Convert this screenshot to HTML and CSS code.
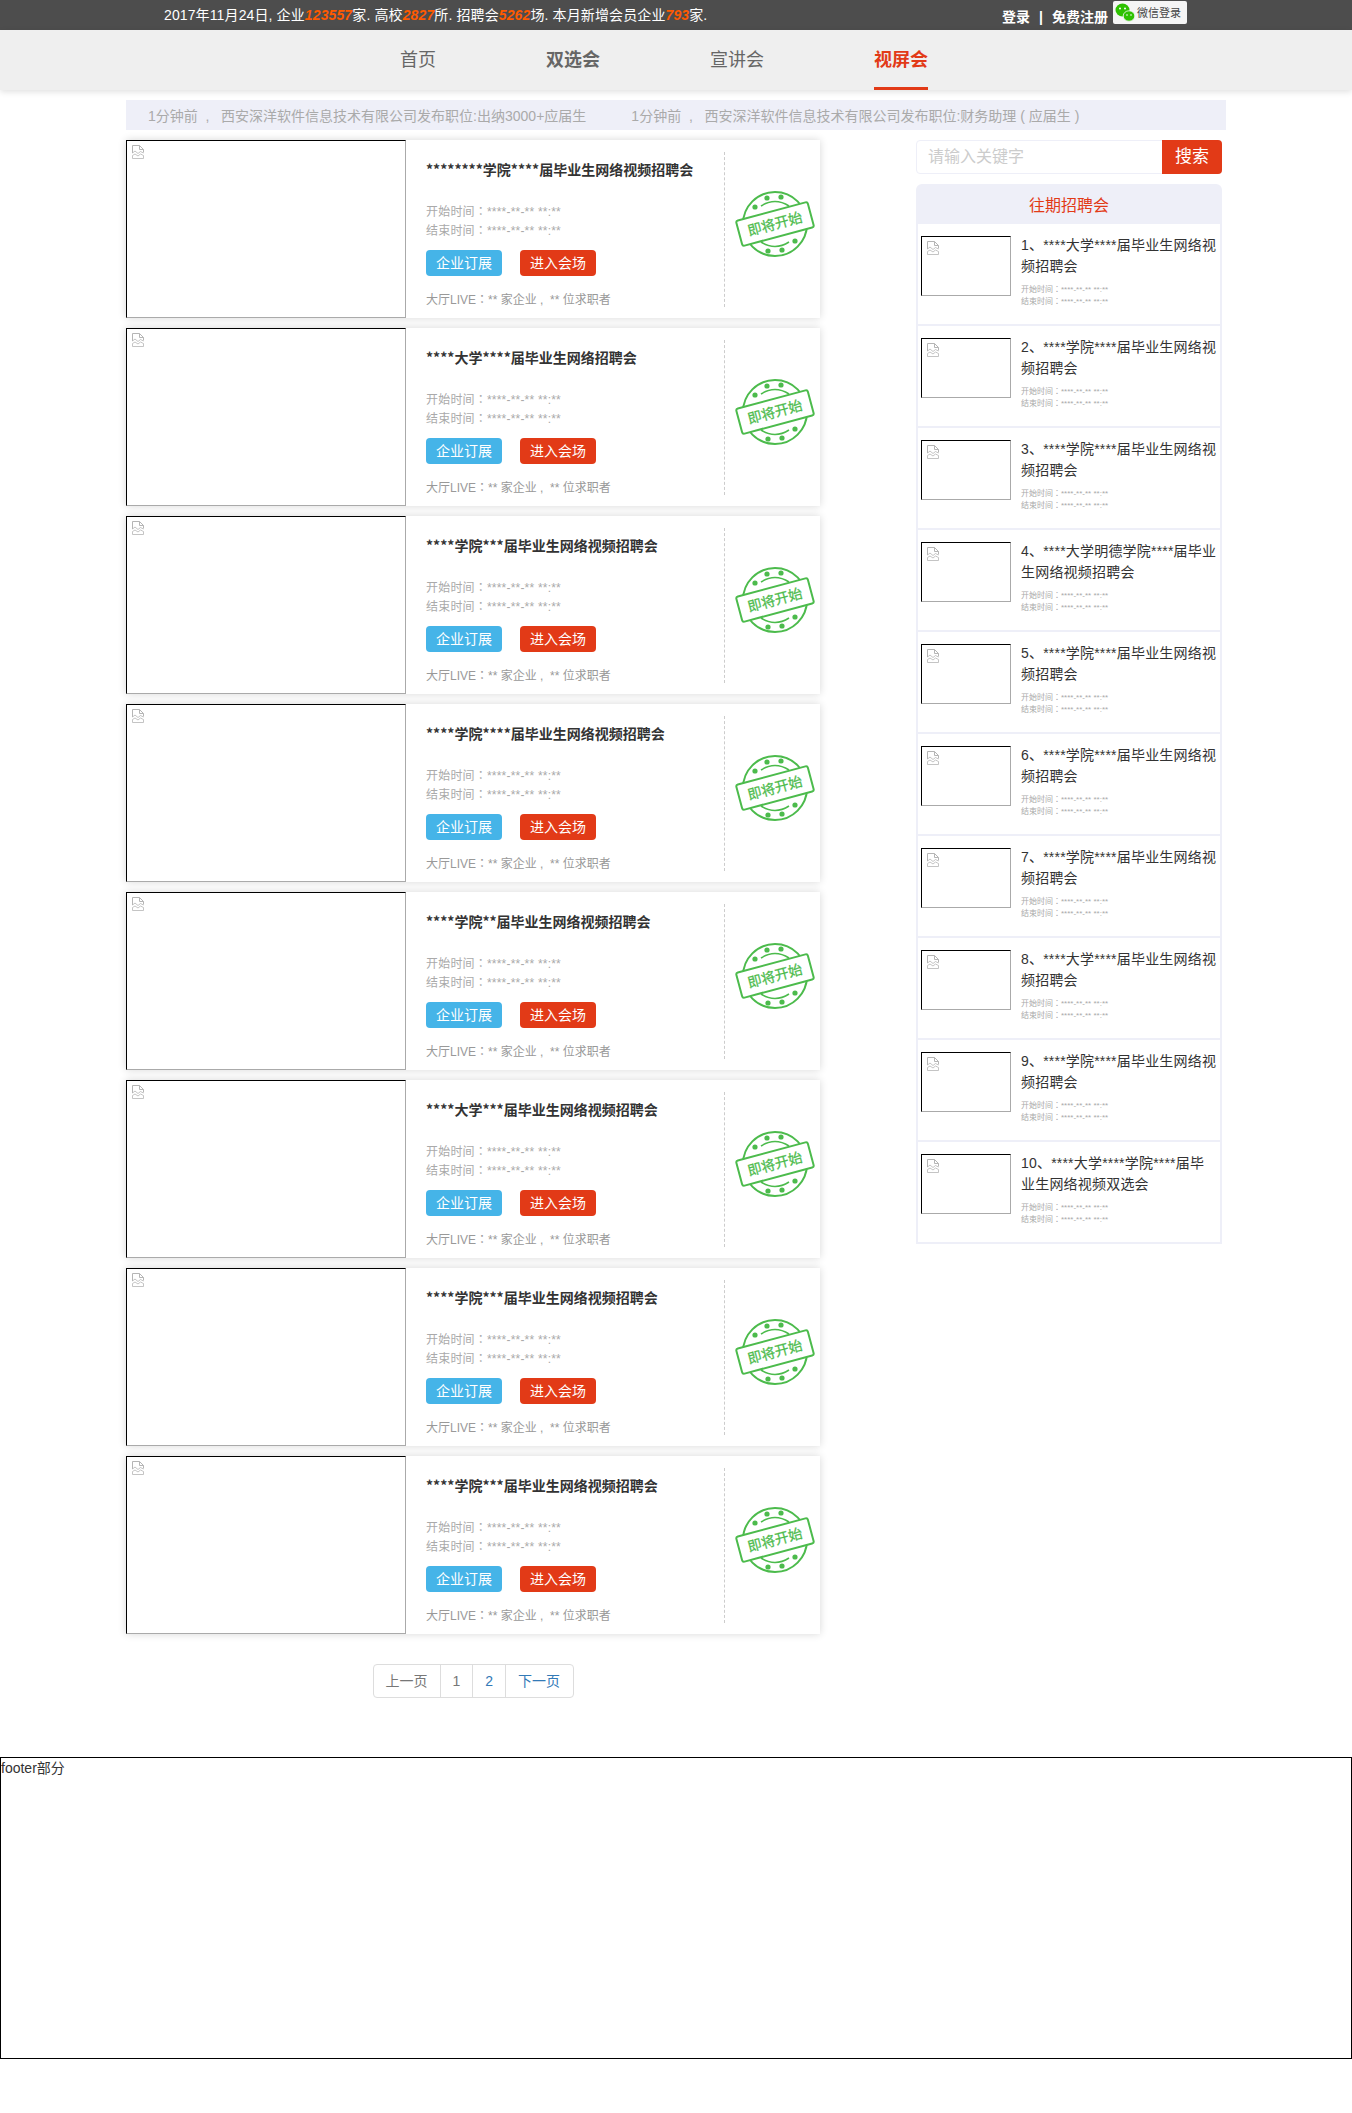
FILE: index.html
```html
<!DOCTYPE html>
<html>
<head>
    <meta charset="UTF-8">
    <title>视屏会</title>
    <link rel="stylesheet" href="styles.css">
</head>
<body>
    <svg class="defs" width="0" height="0">
        <symbol id="broken" viewBox="0 0 12 14">
            <path d="M.5 8V.5H7.5L11.5 4.5V7.5M7.5 .5V4.5H11.5" fill="none" stroke="#b5b5b5"/>
            <path d="M.5 8L3 6L6 8.5L8.5 6.5L11.5 8M.5 10.5L3 9L6 11L8.5 9L11.5 10.5V13.5H.5Z" fill="none" stroke="#b5b5b5" stroke-width=".8"/>
        </symbol>
        <symbol id="stamp" viewBox="0 0 80 80">
            <g fill="none" stroke="#4cbb4c">
                <circle cx="40" cy="40" r="32" stroke-width="2"/>
                <path d="M26 22Q40 13 54 22M26 58Q40 67 54 58" stroke-width="1.6"/>
            </g>
            <g fill="#4cbb4c">
                <circle cx="20" cy="23" r="2.6"/><circle cx="32" cy="14" r="2.6"/><circle cx="46" cy="13" r="2.6"/>
                <circle cx="33" cy="67" r="2.6"/><circle cx="47" cy="66" r="2.6"/><circle cx="60" cy="57" r="2.6"/>
            </g>
            <rect x="3" y="27" width="74" height="26" rx="2" transform="rotate(-15 40 40)" fill="#fff" stroke="#4cbb4c" stroke-width="2"/>
        </symbol>
    </svg>

    <div class="topbar">
        <div class="wrap topbar-in">
            <p class="stats">2017年11月24日, 企业<em>123557</em>家. 高校<em>2827</em>所. 招聘会<em>5262</em>场. 本月新增会员企业<em>793</em>家.</p>
            <div class="login">
                <a>登录</a><span class="sep">|</span><a>免费注册</a>
                <span class="wx">
                    <svg width="20" height="20" viewBox="0 0 20 20">
                        <ellipse cx="7.5" cy="7" rx="7" ry="6.5" fill="#2dc100"/>
                        <ellipse cx="14" cy="13" rx="5.8" ry="5.2" fill="#2dc100" stroke="#f5f5f5" stroke-width=".8"/>
                        <circle cx="5" cy="5.5" r="1" fill="#fff"/><circle cx="10" cy="5.5" r="1" fill="#fff"/>
                        <circle cx="12" cy="12" r=".8" fill="#fff"/><circle cx="16" cy="12" r=".8" fill="#fff"/>
                    </svg>
                    微信登录
                </span>
            </div>
        </div>
    </div>

    <nav class="nav">
        <div class="wrap nav-in">
            <a>首页</a>
            <a class="bold">双选会</a>
            <a>宣讲会</a>
            <a class="bold active">视屏会</a>
        </div>
    </nav>

    <div class="wrap">
        <div class="ticker">
            <span>1分钟前&nbsp;&nbsp;,&nbsp;&nbsp;&nbsp;西安深洋软件信息技术有限公司发布职位:出纳3000+应届生</span>
            <span>1分钟前&nbsp;&nbsp;,&nbsp;&nbsp;&nbsp;西安深洋软件信息技术有限公司发布职位:财务助理 ( 应届生 )</span>
        </div>

        <div class="main">
            <div class="list">
                <div class="card">
                    <div class="pic"><svg class="bad"><use href="#broken"/></svg></div>
                    <div class="info">
                        <h3>********学院****届毕业生网络视频招聘会</h3>
                        <p class="time">开始时间：****-**-** **:**<br>结束时间：****-**-** **:**</p>
                        <div class="btns"><a class="btn blue">企业订展</a><a class="btn red">进入会场</a></div>
                        <p class="live">大厅LIVE：** 家企业&nbsp;,&nbsp;&nbsp;** 位求职者</p>
                    </div>
                    <svg class="stamp" viewBox="0 0 80 80"><use href="#stamp"/><text x="40" y="45" transform="rotate(-15 40 40)" class="stamp-text">即将开始</text></svg>
                </div>
                <div class="card">
                    <div class="pic"><svg class="bad"><use href="#broken"/></svg></div>
                    <div class="info">
                        <h3>****大学****届毕业生网络招聘会</h3>
                        <p class="time">开始时间：****-**-** **:**<br>结束时间：****-**-** **:**</p>
                        <div class="btns"><a class="btn blue">企业订展</a><a class="btn red">进入会场</a></div>
                        <p class="live">大厅LIVE：** 家企业&nbsp;,&nbsp;&nbsp;** 位求职者</p>
                    </div>
                    <svg class="stamp" viewBox="0 0 80 80"><use href="#stamp"/><text x="40" y="45" transform="rotate(-15 40 40)" class="stamp-text">即将开始</text></svg>
                </div>
                <div class="card">
                    <div class="pic"><svg class="bad"><use href="#broken"/></svg></div>
                    <div class="info">
                        <h3>****学院***届毕业生网络视频招聘会</h3>
                        <p class="time">开始时间：****-**-** **:**<br>结束时间：****-**-** **:**</p>
                        <div class="btns"><a class="btn blue">企业订展</a><a class="btn red">进入会场</a></div>
                        <p class="live">大厅LIVE：** 家企业&nbsp;,&nbsp;&nbsp;** 位求职者</p>
                    </div>
                    <svg class="stamp" viewBox="0 0 80 80"><use href="#stamp"/><text x="40" y="45" transform="rotate(-15 40 40)" class="stamp-text">即将开始</text></svg>
                </div>
                <div class="card">
                    <div class="pic"><svg class="bad"><use href="#broken"/></svg></div>
                    <div class="info">
                        <h3>****学院****届毕业生网络视频招聘会</h3>
                        <p class="time">开始时间：****-**-** **:**<br>结束时间：****-**-** **:**</p>
                        <div class="btns"><a class="btn blue">企业订展</a><a class="btn red">进入会场</a></div>
                        <p class="live">大厅LIVE：** 家企业&nbsp;,&nbsp;&nbsp;** 位求职者</p>
                    </div>
                    <svg class="stamp" viewBox="0 0 80 80"><use href="#stamp"/><text x="40" y="45" transform="rotate(-15 40 40)" class="stamp-text">即将开始</text></svg>
                </div>
                <div class="card">
                    <div class="pic"><svg class="bad"><use href="#broken"/></svg></div>
                    <div class="info">
                        <h3>****学院**届毕业生网络视频招聘会</h3>
                        <p class="time">开始时间：****-**-** **:**<br>结束时间：****-**-** **:**</p>
                        <div class="btns"><a class="btn blue">企业订展</a><a class="btn red">进入会场</a></div>
                        <p class="live">大厅LIVE：** 家企业&nbsp;,&nbsp;&nbsp;** 位求职者</p>
                    </div>
                    <svg class="stamp" viewBox="0 0 80 80"><use href="#stamp"/><text x="40" y="45" transform="rotate(-15 40 40)" class="stamp-text">即将开始</text></svg>
                </div>
                <div class="card">
                    <div class="pic"><svg class="bad"><use href="#broken"/></svg></div>
                    <div class="info">
                        <h3>****大学***届毕业生网络视频招聘会</h3>
                        <p class="time">开始时间：****-**-** **:**<br>结束时间：****-**-** **:**</p>
                        <div class="btns"><a class="btn blue">企业订展</a><a class="btn red">进入会场</a></div>
                        <p class="live">大厅LIVE：** 家企业&nbsp;,&nbsp;&nbsp;** 位求职者</p>
                    </div>
                    <svg class="stamp" viewBox="0 0 80 80"><use href="#stamp"/><text x="40" y="45" transform="rotate(-15 40 40)" class="stamp-text">即将开始</text></svg>
                </div>
                <div class="card">
                    <div class="pic"><svg class="bad"><use href="#broken"/></svg></div>
                    <div class="info">
                        <h3>****学院***届毕业生网络视频招聘会</h3>
                        <p class="time">开始时间：****-**-** **:**<br>结束时间：****-**-** **:**</p>
                        <div class="btns"><a class="btn blue">企业订展</a><a class="btn red">进入会场</a></div>
                        <p class="live">大厅LIVE：** 家企业&nbsp;,&nbsp;&nbsp;** 位求职者</p>
                    </div>
                    <svg class="stamp" viewBox="0 0 80 80"><use href="#stamp"/><text x="40" y="45" transform="rotate(-15 40 40)" class="stamp-text">即将开始</text></svg>
                </div>
                <div class="card">
                    <div class="pic"><svg class="bad"><use href="#broken"/></svg></div>
                    <div class="info">
                        <h3>****学院***届毕业生网络视频招聘会</h3>
                        <p class="time">开始时间：****-**-** **:**<br>结束时间：****-**-** **:**</p>
                        <div class="btns"><a class="btn blue">企业订展</a><a class="btn red">进入会场</a></div>
                        <p class="live">大厅LIVE：** 家企业&nbsp;,&nbsp;&nbsp;** 位求职者</p>
                    </div>
                    <svg class="stamp" viewBox="0 0 80 80"><use href="#stamp"/><text x="40" y="45" transform="rotate(-15 40 40)" class="stamp-text">即将开始</text></svg>
                </div>

                <div class="pager">
                    <a class="off">上一页</a><a class="off">1</a><a>2</a><a>下一页</a>
                </div>
            </div>

            <div class="side">
                <div class="search">
                    <span class="search-input">请输入关键字</span>
                    <a class="search-btn">搜索</a>
                </div>
                <div class="past">
                    <h4>往期招聘会</h4>
                    <div class="item">
                        <div class="pic small"><svg class="bad"><use href="#broken"/></svg></div>
                        <div class="item-text"><p class="item-title">1、****大学****届毕业生网络视频招聘会</p><p class="item-time">开始时间：****-**-** **:**<br>结束时间：****-**-** **:**</p></div>
                    </div>
                    <div class="item">
                        <div class="pic small"><svg class="bad"><use href="#broken"/></svg></div>
                        <div class="item-text"><p class="item-title">2、****学院****届毕业生网络视频招聘会</p><p class="item-time">开始时间：****-**-** **:**<br>结束时间：****-**-** **:**</p></div>
                    </div>
                    <div class="item">
                        <div class="pic small"><svg class="bad"><use href="#broken"/></svg></div>
                        <div class="item-text"><p class="item-title">3、****学院****届毕业生网络视频招聘会</p><p class="item-time">开始时间：****-**-** **:**<br>结束时间：****-**-** **:**</p></div>
                    </div>
                    <div class="item">
                        <div class="pic small"><svg class="bad"><use href="#broken"/></svg></div>
                        <div class="item-text"><p class="item-title">4、****大学明德学院****届毕业生网络视频招聘会</p><p class="item-time">开始时间：****-**-** **:**<br>结束时间：****-**-** **:**</p></div>
                    </div>
                    <div class="item">
                        <div class="pic small"><svg class="bad"><use href="#broken"/></svg></div>
                        <div class="item-text"><p class="item-title">5、****学院****届毕业生网络视频招聘会</p><p class="item-time">开始时间：****-**-** **:**<br>结束时间：****-**-** **:**</p></div>
                    </div>
                    <div class="item">
                        <div class="pic small"><svg class="bad"><use href="#broken"/></svg></div>
                        <div class="item-text"><p class="item-title">6、****学院****届毕业生网络视频招聘会</p><p class="item-time">开始时间：****-**-** **:**<br>结束时间：****-**-** **:**</p></div>
                    </div>
                    <div class="item">
                        <div class="pic small"><svg class="bad"><use href="#broken"/></svg></div>
                        <div class="item-text"><p class="item-title">7、****学院****届毕业生网络视频招聘会</p><p class="item-time">开始时间：****-**-** **:**<br>结束时间：****-**-** **:**</p></div>
                    </div>
                    <div class="item">
                        <div class="pic small"><svg class="bad"><use href="#broken"/></svg></div>
                        <div class="item-text"><p class="item-title">8、****大学****届毕业生网络视频招聘会</p><p class="item-time">开始时间：****-**-** **:**<br>结束时间：****-**-** **:**</p></div>
                    </div>
                    <div class="item">
                        <div class="pic small"><svg class="bad"><use href="#broken"/></svg></div>
                        <div class="item-text"><p class="item-title">9、****学院****届毕业生网络视频招聘会</p><p class="item-time">开始时间：****-**-** **:**<br>结束时间：****-**-** **:**</p></div>
                    </div>
                    <div class="item">
                        <div class="pic small"><svg class="bad"><use href="#broken"/></svg></div>
                        <div class="item-text"><p class="item-title">10、****大学****学院****届毕业生网络视频双选会</p><p class="item-time">开始时间：****-**-** **:**<br>结束时间：****-**-** **:**</p></div>
                    </div>
                </div>
            </div>
        </div>
    </div>

    <footer class="footer">footer部分</footer>
</body>
</html>
```

FILE: styles.css
```css
* {
    box-sizing: border-box;
}
body {
    margin: 0;
    padding-bottom: 54px;
    font-family: "Liberation Sans", "Noto Sans CJK SC", sans-serif;
    font-size: 14px;
    color: #333;
    background: #fff;
}
p, h3, h4 {
    margin: 0;
}
.defs {
    position: absolute;
}
.wrap {
    width: 1100px;
    margin: 0 auto;
}

/* top bar */
.topbar {
    height: 30px;
    background: #4d4d4d;
    color: #fff;
}
.topbar-in {
    display: flex;
    justify-content: space-between;
    padding: 0 39px 0 38px;
}
.stats {
    line-height: 30px;
    letter-spacing: .12px;
}
.stats em {
    color: #ff5a00;
    font-weight: bold;
}
.login {
    display: flex;
    align-items: flex-start;
    font-weight: bold;
    line-height: 34px;
}
.sep {
    margin: 0 9px;
}
.wx {
    display: flex;
    align-items: center;
    gap: 2px;
    width: 74px;
    height: 23px;
    margin: 1px 0 0 5px;
    padding-left: 2px;
    background: #f5f5f5;
    border-radius: 2px;
    color: #444;
    font-size: 11px;
    font-weight: normal;
}

/* nav */
.nav {
    height: 60px;
    background: #efefef;
    box-shadow: 0 2px 6px rgba(0,0,0,.12);
}
.nav-in {
    display: flex;
    gap: 110px;
    padding-left: 274px;
}
.nav-in a {
    height: 60px;
    line-height: 60px;
    font-size: 18px;
    color: #666;
}
.nav-in .bold {
    font-weight: bold;
}
.nav-in .active {
    color: #e23a17;
    border-bottom: 3px solid #e23a17;
}

.ticker {
    display: flex;
    gap: 45px;
    height: 30px;
    margin: 10px 0;
    padding-left: 22px;
    background: #eeeff8;
    color: #aaa;
    line-height: 32px;
    white-space: nowrap;
}

.main {
    display: flex;
    justify-content: space-between;
    padding-right: 4px;
}

/* cards */
.list {
    width: 694px;
}
.card {
    display: flex;
    height: 178px;
    margin-bottom: 10px;
    background: #fff;
    box-shadow: 0 0 8px rgba(0,0,0,.16);
}
.pic {
    flex: none;
    width: 280px;
    height: 178px;
    padding: 4px 5px;
    border: 1px solid;
    border-color: #000 #aaa #aaa #000;
    background: #fff;
}
.bad {
    display: block;
    width: 12px;
    height: 14px;
}
.info {
    flex: none;
    width: 319px;
    height: 155px;
    margin-top: 12px;
    padding-left: 20px;
    border-right: 1px dashed #ccc;
}
.info h3 {
    margin-top: 7px;
    font-family: "Noto Sans CJK SC", sans-serif;
    font-size: 14px;
    line-height: 20px;
    color: #333;
}
.time {
    margin-top: 24px;
    font-family: "Liberation Sans", "Noto Sans CJK TC", sans-serif;
    font-size: 12px;
    line-height: 19px;
    letter-spacing: .2px;
    color: #aaa;
}
.btns {
    display: flex;
    gap: 18px;
    margin-top: 9px;
}
.btn {
    width: 76px;
    height: 26px;
    border-radius: 4px;
    color: #fff;
    text-align: center;
    line-height: 26px;
}
.blue {
    background: #45b4e8;
}
.red {
    background: #e23a17;
}
.live {
    margin-top: 15px;
    font-family: "Liberation Sans", "Noto Sans CJK TC", sans-serif;
    font-size: 12px;
    line-height: 18px;
    color: #999;
}
.stamp {
    flex: none;
    width: 80px;
    height: 80px;
    margin: 44px 0 0 10px;
}
.stamp-text {
    fill: #4cbb4c;
    stroke: #4cbb4c;
    stroke-width: .25;
    font-size: 14px;
    text-anchor: middle;
}

/* pagination */
.pager {
    display: flex;
    width: 201px;
    height: 34px;
    margin: 30px auto 0;
    border: 1px solid #ddd;
    border-radius: 4px;
    line-height: 32px;
}
.pager a {
    padding: 0 12px;
    color: #337ab7;
    border-left: 1px solid #ddd;
}
.pager a:first-child {
    border-left: none;
}
.pager .off {
    color: #777;
}

/* right column */
.side {
    width: 306px;
}
.search {
    display: flex;
    height: 34px;
    border: 1px solid #eeeff8;
    border-radius: 4px;
}
.search-input {
    flex: 1;
    padding-left: 11px;
    color: #ccc;
    font-size: 16px;
    line-height: 32px;
}
.search-btn {
    width: 60px;
    margin: -1px;
    background: #e23a17;
    border-radius: 0 4px 4px 0;
    color: #fff;
    font-size: 17px;
    text-align: center;
    line-height: 34px;
}
.past {
    margin-top: 10px;
    padding: 0 2px 2px;
    background: #eeeff8;
    border-radius: 6px 6px 0 0;
}
.past h4 {
    height: 40px;
    color: #e23a17;
    font-size: 16px;
    font-weight: normal;
    text-align: center;
    line-height: 44px;
}
.item {
    display: flex;
    height: 100px;
    margin-bottom: 2px;
    padding: 12px 0 0 3px;
    background: #fff;
}
.item:last-child {
    margin-bottom: 0;
}
.pic.small {
    width: 90px;
    height: 60px;
}
.item-text {
    flex: 1;
    padding: 0 3px 0 10px;
}
.item-title {
    margin-top: -1px;
    line-height: 21px;
    letter-spacing: .2px;
    color: #333;
}
.item-time {
    margin-top: 7px;
    font-family: "Liberation Sans", "Noto Sans CJK TC", sans-serif;
    font-size: 8px;
    line-height: 12px;
    color: #aaa;
}

.footer {
    height: 302px;
    margin-top: 59px;
    border: 1px solid #000;
    line-height: 20px;
}
```
